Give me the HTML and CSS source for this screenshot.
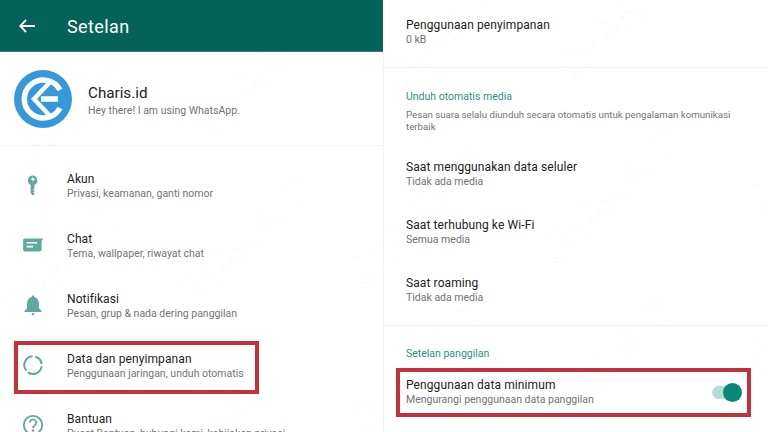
FILE: index.html
```html
<!DOCTYPE html>
<html lang="en">
<head>
    <meta charset="UTF-8">
    <meta name="viewport" content="width=device-width, initial-scale=1.0">
    <title>Setelan</title>
    <link rel="stylesheet" href="styles.css">
</head>
<body>

<div class="page">
    <div class="panel panel-left">
        <div class="appbar">
            <svg class="back" viewBox="0 0 16 14"><path d="M7 1 1.2 7 7 13M1.5 7H16" fill="none" stroke="#fff" stroke-width="1.8"/></svg>
            <span class="appbar-title">Setelan</span>
        </div>

        <div class="profile">
            <svg class="avatar" viewBox="0 0 58 58">
                <circle cx="29" cy="29" r="29" fill="#3498db"/>
                <path d="M46 20A19 19 0 1 0 46 38" fill="none" stroke="#fff" stroke-width="5.500"/>
                <path d="M37 11 20 29 37 47" fill="none" stroke="#fff" stroke-width="4.500"/>
                <path d="M27 29H44" fill="none" stroke="#fff" stroke-width="5.500"/>
            </svg>
            <div>
                <div class="profile-name">Charis.id</div>
                <div class="sub">Hey there! I am using WhatsApp.</div>
            </div>
        </div>

        <div class="menu">
            <div class="menu-row">
                <svg class="menu-icon" viewBox="0 0 24 24"><path d="M12 1.500a5.500 5.500 0 0 0-2.500 10.400V21l1.700 1.800h2.300v-2h-1.200v-1.300h1.200v-1.500h-1.200v-1.500h1.200v-4.600A5.500 5.500 0 0 0 12 1.500Zm0 2.200a1.800 1.800 0 1 1 0 3.600 1.800 1.800 0 0 1 0-3.600Z" fill="#5eaa9c" fill-rule="evenodd"/></svg>
                <div>
                    <div class="title">Akun</div>
                    <div class="sub">Privasi, keamanan, ganti nomor</div>
                </div>
            </div>
            <div class="menu-row">
                <svg class="menu-icon" viewBox="0 0 24 24"><path d="M3.500 5h19.500l-1.600 2.600V17a2 2 0 0 1-2 2H3a1.800 1.800 0 0 1-1.800-1.800V7A2 2 0 0 1 3.500 5Z" fill="#5eaa9c"/><path d="M5 9.500h11.500M5 13.700h7" stroke="#fff" stroke-width="1.800"/></svg>
                <div>
                    <div class="title">Chat</div>
                    <div class="sub">Tema, wallpaper, riwayat chat</div>
                </div>
            </div>
            <div class="menu-row">
                <svg class="menu-icon" viewBox="0 0 24 24"><path d="M12 1.500c1 0 1.500.7 1.500 1.700 3.300 1 5 3.800 5 7.300v5l2.800 3v1H2.700v-1l2.800-3v-5c0-3.500 1.700-6.300 5-7.300 0-1 .5-1.700 1.500-1.700Z" fill="#5eaa9c"/><circle cx="12" cy="22" r="1.300" fill="#5eaa9c"/></svg>
                <div>
                    <div class="title">Notifikasi</div>
                    <div class="sub">Pesan, grup &amp; nada dering panggilan</div>
                </div>
            </div>
            <div class="menu-row">
                <svg class="menu-icon" viewBox="0 0 24 24"><g fill="none" stroke="#5eaa9c" stroke-width="2.200"><path d="M14.500 3a9.500 9.500 0 0 1 7 8"/><path d="M21.400 13.500A9.500 9.500 0 0 1 6.500 20"/><path d="M4.800 18.200A9.500 9.500 0 0 1 11.500 2.500"/></g></svg>
                <div>
                    <div class="title">Data dan penyimpanan</div>
                    <div class="sub">Penggunaan jaringan, unduh otomatis</div>
                </div>
            </div>
            <div class="menu-row">
                <svg class="menu-icon" viewBox="0 0 24 24"><circle cx="12" cy="12" r="10" fill="none" stroke="#5eaa9c" stroke-width="2"/><path d="M8.500 9.500a3.500 3.500 0 1 1 5.500 2.800c-1.200.9-2 1.400-2 2.900" fill="none" stroke="#5eaa9c" stroke-width="2"/><circle cx="12" cy="18" r="1.300" fill="#5eaa9c"/></svg>
                <div>
                    <div class="title">Bantuan</div>
                    <div class="sub">Pusat Bantuan, hubungi kami, kebijakan privasi</div>
                </div>
            </div>
        </div>
        <div class="highlight highlight-left"></div>
    </div>

    <div class="panel panel-right">
        <div class="section section-storage">
            <div class="title">Penggunaan penyimpanan</div>
            <div class="sub">0 kB</div>
        </div>

        <div class="section section-media">
            <div class="heading">Unduh otomatis media</div>
            <div class="note">Pesan suara selalu diunduh secara otomatis untuk pengalaman komunikasi terbaik</div>
            <div class="pref">
                <div class="title">Saat menggunakan data seluler</div>
                <div class="sub">Tidak ada media</div>
            </div>
            <div class="pref">
                <div class="title">Saat terhubung ke Wi-Fi</div>
                <div class="sub">Semua media</div>
            </div>
            <div class="pref">
                <div class="title">Saat roaming</div>
                <div class="sub">Tidak ada media</div>
            </div>
        </div>

        <div class="section section-calls">
            <div class="heading">Setelan panggilan</div>
            <div class="call-row">
                <div>
                    <div class="title">Penggunaan data minimum</div>
                    <div class="sub">Mengurangi penggunaan data panggilan</div>
                </div>
                <div class="switch"><span class="switch-thumb"></span></div>
            </div>
        </div>
        <div class="highlight highlight-right"></div>
    </div>

    <div class="watermarks">
        <span class="mark" style="left:20px;top:157px">CHARIS.ID</span>
        <span class="mark" style="left:200px;top:130px">CHARIS.ID</span>
        <span class="mark" style="left:394px;top:80px">CHARIS.ID</span>
        <span class="mark" style="left:562px;top:75px">CHARIS.ID</span>
        <span class="mark" style="left:-10px;top:330px">CHARIS.ID</span>
        <span class="mark" style="left:177px;top:306px">CHARIS.ID</span>
        <span class="mark" style="left:353px;top:279px">CHARIS.ID</span>
        <span class="mark" style="left:545px;top:258px">CHARIS.ID</span>
        <span class="mark" style="left:750px;top:207px">CHARIS.ID</span>
        <span class="mark" style="left:147px;top:500px">CHARIS.ID</span>
        <span class="mark" style="left:353px;top:430px">CHARIS.ID</span>
        <span class="mark" style="left:540px;top:430px">CHARIS.ID</span>
        <span class="mark" style="left:734px;top:383px">CHARIS.ID</span>
    </div>
</div>

</body>
</html>
```

FILE: styles.css
```css
html, body {
    margin: 0;
    height: 100%;
    overflow: hidden;
    background-color: #fff;
}
.page {
    position: relative;
    display: flex;
    width: 768px;
    height: 432px;
    overflow: hidden;
    font-family: Roboto, sans-serif;
}
.panel {
    position: relative;
    width: 384px;
    height: 432px;
    overflow: hidden;
    box-sizing: border-box;
}
.panel-left {
    border-right: 1px solid #f3f3f3;
}
.appbar {
    display: flex;
    align-items: center;
    height: 52px;
    padding-top: 1px;
    background-color: #05625a;
    border-bottom: 1px solid #2f7d74;
    box-sizing: border-box;
    color: #fff;
}
.back {
    width: 16px;
    height: 14px;
    margin-left: 19px;
}
.appbar-title {
    margin-left: 32px;
    font-size: 18px;
    letter-spacing: 0.4px;
}
.profile {
    display: flex;
    align-items: center;
    height: 94px;
    padding-top: 2px;
    border-bottom: 1px solid #f1f1f1;
    box-sizing: border-box;
}
.avatar {
    width: 58px;
    height: 58px;
    margin: -2px 16px 0 14px;
}
.profile-name {
    margin-bottom: -2px;
    font-size: 15.200px;
    line-height: 23px;
    color: #222;
}
.menu {
    padding-top: 10px;
}
.menu-row {
    display: flex;
    align-items: center;
    height: 60px;
}
.menu-icon {
    width: 22px;
    height: 22px;
    margin: -2px 23px 0 22px;
    flex: none;
}
.title {
    margin-bottom: -1px;
    font-size: 12px;
    line-height: 16px;
    letter-spacing: 0.1px;
    color: #222;
}
.sub {
    font-size: 10.500px;
    line-height: 15px;
    color: #6f7478;
}
.section {
    padding: 0 22px;
    border-bottom: 1px solid #f1f1f1;
    box-sizing: border-box;
}
.section-storage {
    height: 68px;
    padding-top: 17px;
}
.section-media {
    height: 258px;
    padding-top: 22px;
}
.section-calls {
    padding-top: 21px;
    border-bottom: none;
}
.heading {
    font-size: 10.500px;
    line-height: 14px;
    color: #2b9184;
}
.note {
    margin-top: 5px;
    font-size: 9.700px;
    line-height: 11.500px;
    color: #6f7478;
}
.pref {
    height: 58px;
}
.section-media .note {
    margin-bottom: 27px;
}
.call-row {
    display: flex;
    align-items: center;
    justify-content: space-between;
    margin-top: 16px;
}
.switch {
    position: relative;
    width: 29px;
    height: 13px;
    margin-right: 5px;
    border-radius: 7px;
    background-color: #b5dcd6;
}
.switch-thumb {
    position: absolute;
    top: -3px;
    right: -1px;
    width: 19px;
    height: 19px;
    border-radius: 50%;
    background-color: #07897a;
}
.highlight {
    position: absolute;
    border: 4px solid #c4313a;
    box-sizing: border-box;
}
.highlight-left {
    left: 14px;
    top: 341px;
    width: 245px;
    height: 53px;
}
.highlight-right {
    left: 12px;
    top: 368px;
    width: 355px;
    height: 49px;
}
.watermarks {
    position: absolute;
    inset: 0;
    pointer-events: none;
}
.mark {
    position: absolute;
    margin-top: -20px;
    font-size: 38px;
    line-height: 40px;
    color: transparent;
    -webkit-text-stroke: 1px rgba(0, 0, 0, 0.03);
    transform: rotate(-44deg);
    transform-origin: 0 50%;
    white-space: nowrap;
}
```
